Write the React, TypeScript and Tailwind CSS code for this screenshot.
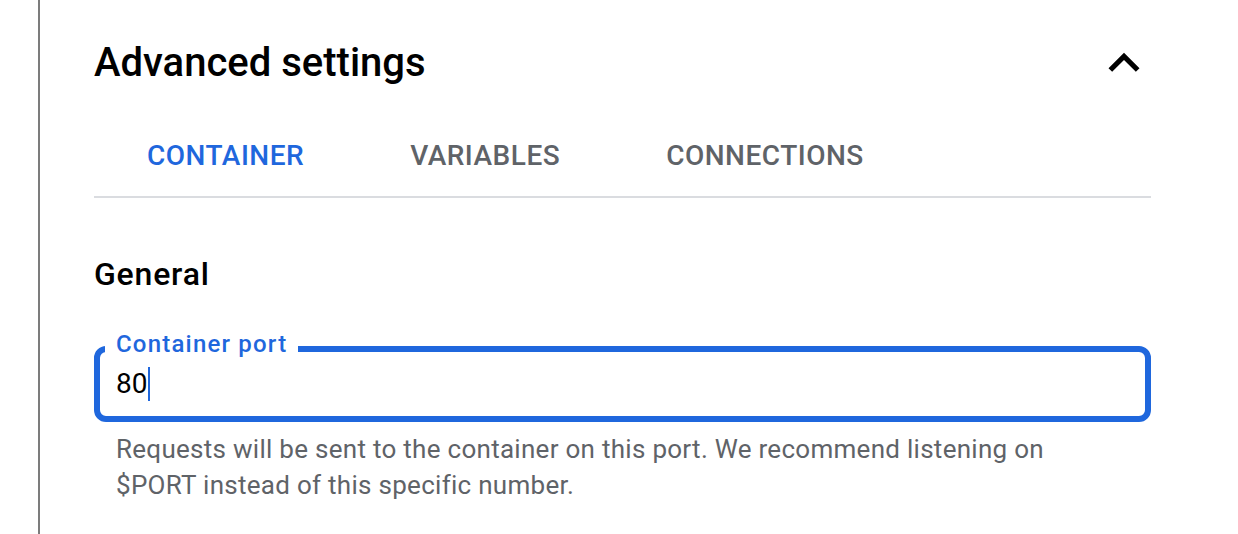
import React from "react";

const tabs = ["CONTAINER", "VARIABLES", "CONNECTIONS"];

function ChevronUp() {
  return (
    <svg viewBox="0 0 24 24" className="w-[62px] h-[62px] -mr-[4px] shrink-0" fill="#000">
      <path d="M12 8l-6 6 1.41 1.41L12 10.83l4.59 4.58L18 14z" />
    </svg>
  );
}

export default function App() {
  return (
    <div className="w-full h-[534px] bg-white flex overflow-hidden font-['Roboto','Liberation_Sans',sans-serif]">
      {/* left rail */}
      <div className="ml-[38px] w-[2px] h-full bg-[#7c7c7c] shrink-0" />

      <div className="ml-[54px] w-[1057px] flex flex-col">
        {/* header */}
        <div className="mt-[39px] h-[48px] flex items-center justify-between">
          <h2 className="text-[40px] leading-[48px] font-medium text-black">Advanced settings</h2>
          <ChevronUp />
        </div>

        {/* tabs */}
        <div className="mt-[53px] flex border-b-2 border-[#dadce0]">
          {tabs.map((t, i) => (
            <div
              key={t}
              className={
                "px-[53px] pb-[24px] text-[28px] leading-[32px] font-medium tracking-[0.5px] " +
                (i === 0 ? "text-[#1f67dd]" : "text-[#5f6368]")
              }
            >
              {t}
            </div>
          ))}
        </div>

        {/* general */}
        <h3 className="mt-[56px] text-[32px] leading-[40px] font-medium tracking-[0.8px] text-black">General</h3>

        <div className="mt-[52px] relative h-[76px] rounded-[12px] border-[6px] border-[#1f67dd] flex items-center pl-[16px]">
          <span className="absolute left-[5px] -top-[20px] px-[11px] bg-white text-[24px] leading-[24px] font-medium tracking-[1.2px] text-[#1f67dd]">
            Container port
          </span>
          <span className="text-[28px] leading-[32px] text-black">80</span>
          <span className="ml-[1px] inline-block w-[2px] h-[34px] bg-[#1f67dd]" />
        </div>

        <p className="mt-[9px] ml-[22px] w-[960px] text-[26px] leading-[36px] tracking-[0.28px] text-[#5f6368]">
          Requests will be sent to the container on this port. We recommend listening on $PORT instead of this specific number.
        </p>
      </div>
    </div>
  );
}
